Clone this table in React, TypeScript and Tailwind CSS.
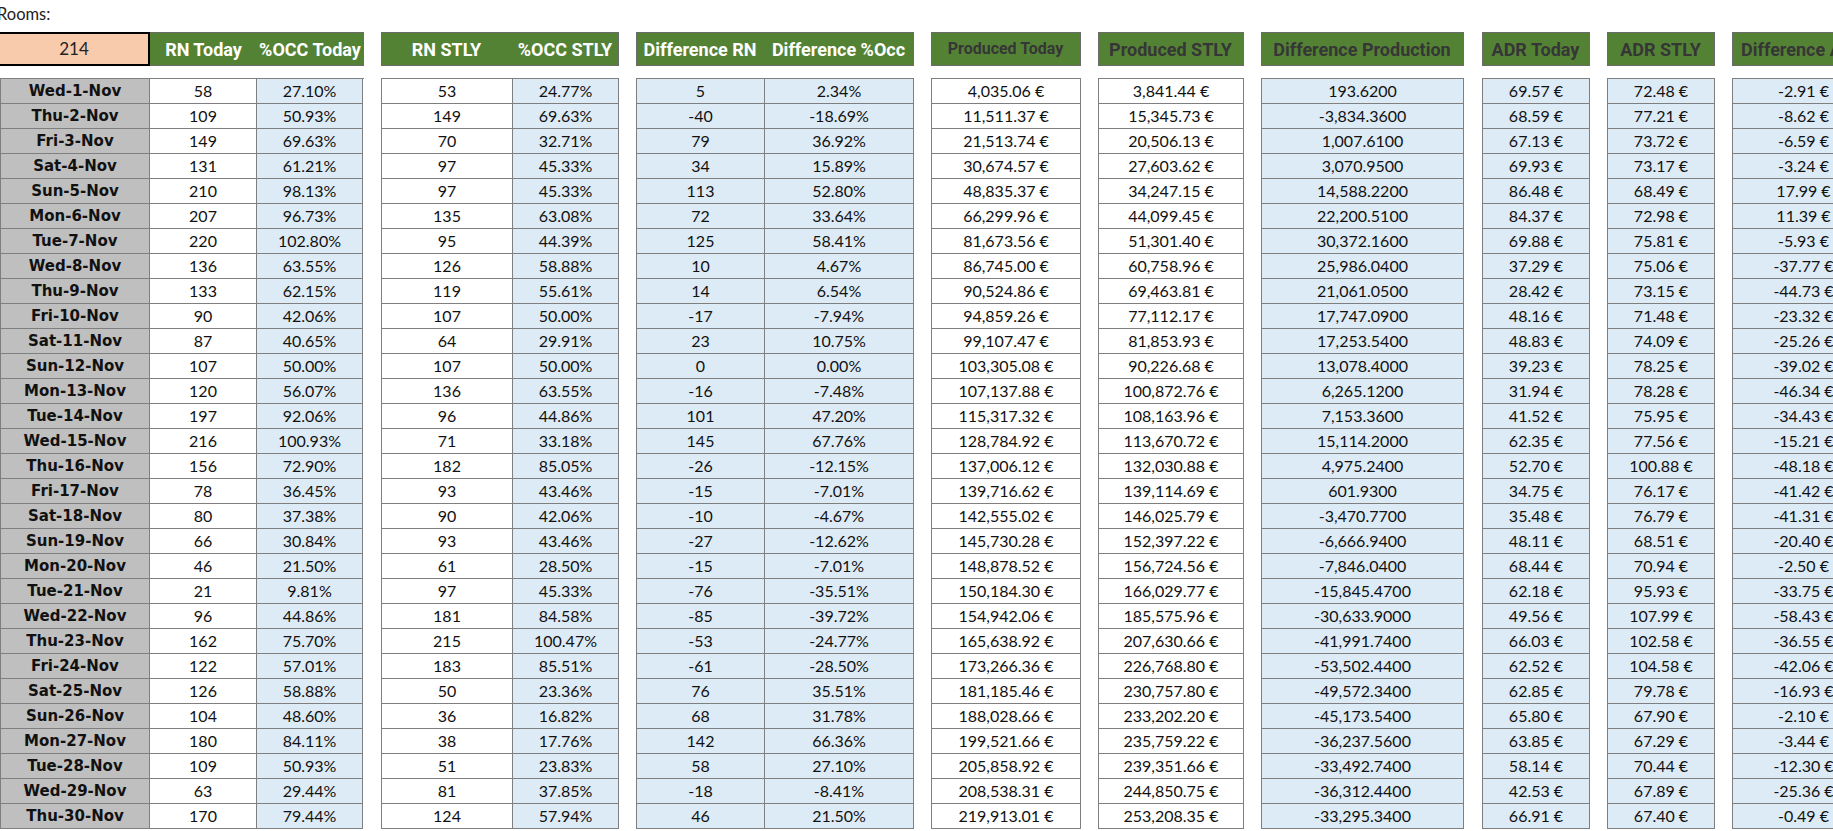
import React from 'react';

const rows: string[][] = [
  ['Wed-1-Nov', '58', '27.10%', '53', '24.77%', '5', '2.34%', '4,035.06 €', '3,841.44 €', '193.6200', '69.57 €', '72.48 €', '-2.91 €'],
  ['Thu-2-Nov', '109', '50.93%', '149', '69.63%', '-40', '-18.69%', '11,511.37 €', '15,345.73 €', '-3,834.3600', '68.59 €', '77.21 €', '-8.62 €'],
  ['Fri-3-Nov', '149', '69.63%', '70', '32.71%', '79', '36.92%', '21,513.74 €', '20,506.13 €', '1,007.6100', '67.13 €', '73.72 €', '-6.59 €'],
  ['Sat-4-Nov', '131', '61.21%', '97', '45.33%', '34', '15.89%', '30,674.57 €', '27,603.62 €', '3,070.9500', '69.93 €', '73.17 €', '-3.24 €'],
  ['Sun-5-Nov', '210', '98.13%', '97', '45.33%', '113', '52.80%', '48,835.37 €', '34,247.15 €', '14,588.2200', '86.48 €', '68.49 €', '17.99 €'],
  ['Mon-6-Nov', '207', '96.73%', '135', '63.08%', '72', '33.64%', '66,299.96 €', '44,099.45 €', '22,200.5100', '84.37 €', '72.98 €', '11.39 €'],
  ['Tue-7-Nov', '220', '102.80%', '95', '44.39%', '125', '58.41%', '81,673.56 €', '51,301.40 €', '30,372.1600', '69.88 €', '75.81 €', '-5.93 €'],
  ['Wed-8-Nov', '136', '63.55%', '126', '58.88%', '10', '4.67%', '86,745.00 €', '60,758.96 €', '25,986.0400', '37.29 €', '75.06 €', '-37.77 €'],
  ['Thu-9-Nov', '133', '62.15%', '119', '55.61%', '14', '6.54%', '90,524.86 €', '69,463.81 €', '21,061.0500', '28.42 €', '73.15 €', '-44.73 €'],
  ['Fri-10-Nov', '90', '42.06%', '107', '50.00%', '-17', '-7.94%', '94,859.26 €', '77,112.17 €', '17,747.0900', '48.16 €', '71.48 €', '-23.32 €'],
  ['Sat-11-Nov', '87', '40.65%', '64', '29.91%', '23', '10.75%', '99,107.47 €', '81,853.93 €', '17,253.5400', '48.83 €', '74.09 €', '-25.26 €'],
  ['Sun-12-Nov', '107', '50.00%', '107', '50.00%', '0', '0.00%', '103,305.08 €', '90,226.68 €', '13,078.4000', '39.23 €', '78.25 €', '-39.02 €'],
  ['Mon-13-Nov', '120', '56.07%', '136', '63.55%', '-16', '-7.48%', '107,137.88 €', '100,872.76 €', '6,265.1200', '31.94 €', '78.28 €', '-46.34 €'],
  ['Tue-14-Nov', '197', '92.06%', '96', '44.86%', '101', '47.20%', '115,317.32 €', '108,163.96 €', '7,153.3600', '41.52 €', '75.95 €', '-34.43 €'],
  ['Wed-15-Nov', '216', '100.93%', '71', '33.18%', '145', '67.76%', '128,784.92 €', '113,670.72 €', '15,114.2000', '62.35 €', '77.56 €', '-15.21 €'],
  ['Thu-16-Nov', '156', '72.90%', '182', '85.05%', '-26', '-12.15%', '137,006.12 €', '132,030.88 €', '4,975.2400', '52.70 €', '100.88 €', '-48.18 €'],
  ['Fri-17-Nov', '78', '36.45%', '93', '43.46%', '-15', '-7.01%', '139,716.62 €', '139,114.69 €', '601.9300', '34.75 €', '76.17 €', '-41.42 €'],
  ['Sat-18-Nov', '80', '37.38%', '90', '42.06%', '-10', '-4.67%', '142,555.02 €', '146,025.79 €', '-3,470.7700', '35.48 €', '76.79 €', '-41.31 €'],
  ['Sun-19-Nov', '66', '30.84%', '93', '43.46%', '-27', '-12.62%', '145,730.28 €', '152,397.22 €', '-6,666.9400', '48.11 €', '68.51 €', '-20.40 €'],
  ['Mon-20-Nov', '46', '21.50%', '61', '28.50%', '-15', '-7.01%', '148,878.52 €', '156,724.56 €', '-7,846.0400', '68.44 €', '70.94 €', '-2.50 €'],
  ['Tue-21-Nov', '21', '9.81%', '97', '45.33%', '-76', '-35.51%', '150,184.30 €', '166,029.77 €', '-15,845.4700', '62.18 €', '95.93 €', '-33.75 €'],
  ['Wed-22-Nov', '96', '44.86%', '181', '84.58%', '-85', '-39.72%', '154,942.06 €', '185,575.96 €', '-30,633.9000', '49.56 €', '107.99 €', '-58.43 €'],
  ['Thu-23-Nov', '162', '75.70%', '215', '100.47%', '-53', '-24.77%', '165,638.92 €', '207,630.66 €', '-41,991.7400', '66.03 €', '102.58 €', '-36.55 €'],
  ['Fri-24-Nov', '122', '57.01%', '183', '85.51%', '-61', '-28.50%', '173,266.36 €', '226,768.80 €', '-53,502.4400', '62.52 €', '104.58 €', '-42.06 €'],
  ['Sat-25-Nov', '126', '58.88%', '50', '23.36%', '76', '35.51%', '181,185.46 €', '230,757.80 €', '-49,572.3400', '62.85 €', '79.78 €', '-16.93 €'],
  ['Sun-26-Nov', '104', '48.60%', '36', '16.82%', '68', '31.78%', '188,028.66 €', '233,202.20 €', '-45,173.5400', '65.80 €', '67.90 €', '-2.10 €'],
  ['Mon-27-Nov', '180', '84.11%', '38', '17.76%', '142', '66.36%', '199,521.66 €', '235,759.22 €', '-36,237.5600', '63.85 €', '67.29 €', '-3.44 €'],
  ['Tue-28-Nov', '109', '50.93%', '51', '23.83%', '58', '27.10%', '205,858.92 €', '239,351.66 €', '-33,492.7400', '58.14 €', '70.44 €', '-12.30 €'],
  ['Wed-29-Nov', '63', '29.44%', '81', '37.85%', '-18', '-8.41%', '208,538.31 €', '244,850.75 €', '-36,312.4400', '42.53 €', '67.89 €', '-25.36 €'],
  ['Thu-30-Nov', '170', '79.44%', '124', '57.94%', '46', '21.50%', '219,913.01 €', '253,208.35 €', '-33,295.3400', '66.91 €', '67.40 €', '-0.49 €'],
];

type Col = { w: string; bg: string; f: number; label: string };
type Group = { ml: string; dark: boolean; small?: boolean; cols: Col[] };

const BLUE = 'bg-[#ddebf7]';
const WHITE = 'bg-white';

// first group (dates + RN Today) gets its own header with the rooms box
const groups: Group[] = [
  {
    ml: '',
    dark: false,
    cols: [
      { w: 'w-[149px]', bg: 'bg-[#bfbfbf]', f: 0, label: '' },
      { w: 'w-[107px]', bg: WHITE, f: 1, label: 'RN Today' },
      { w: 'w-[106px]', bg: BLUE, f: 2, label: '%OCC Today' },
    ],
  },
  {
    ml: 'ml-[17px]',
    dark: false,
    cols: [
      { w: 'w-[131px]', bg: WHITE, f: 3, label: 'RN STLY' },
      { w: 'w-[106px]', bg: BLUE, f: 4, label: '%OCC STLY' },
    ],
  },
  {
    ml: 'ml-[17px]',
    dark: false,
    cols: [
      { w: 'w-[128px]', bg: BLUE, f: 5, label: 'Difference RN' },
      { w: 'w-[149px]', bg: BLUE, f: 6, label: 'Difference %Occ' },
    ],
  },
  { ml: 'ml-[17px]', dark: true, small: true, cols: [{ w: 'w-[149px]', bg: WHITE, f: 7, label: 'Produced Today' }] },
  { ml: 'ml-[17px]', dark: true, cols: [{ w: 'w-[145px]', bg: WHITE, f: 8, label: 'Produced STLY' }] },
  { ml: 'ml-[17px]', dark: true, cols: [{ w: 'w-[202px]', bg: BLUE, f: 9, label: 'Difference Production' }] },
  { ml: 'ml-[18px]', dark: true, cols: [{ w: 'w-[107px]', bg: BLUE, f: 10, label: 'ADR Today' }] },
  { ml: 'ml-[17px]', dark: true, cols: [{ w: 'w-[107px]', bg: BLUE, f: 11, label: 'ADR STLY' }] },
  { ml: 'ml-[17px]', dark: true, cols: [{ w: 'w-[142px]', bg: BLUE, f: 12, label: 'Difference ADR' }] },
];

const HeaderLabel = ({ col, g }: { col: Col; g: Group }) => (
  <div
    className={`${col.w} shrink-0 flex items-center justify-center whitespace-nowrap font-bold font-['Roboto',sans-serif] ${
      g.dark ? 'text-[#363636]' : 'text-white'
    } ${g.small ? 'text-[16px]' : 'text-[18px]'}`}
  >
    {col.label}
  </div>
);

const GroupBlock = ({ g, first }: { g: Group; first: boolean }) => {
  return (
    <div className={`flex flex-col shrink-0 ${g.ml}`}>
      {/* header */}
      {first ? (
        <div className="flex h-[34px]">
          <div className="w-[150px] shrink-0 bg-[#f8cbad] border-2 border-l-0 border-black flex items-center justify-center text-[17px] text-[#222] font-['Lato',sans-serif]">
            214
          </div>
          <div className="flex bg-[#548235] border border-l-0 border-[#6b6b6b]">
            {g.cols.slice(1).map((c) => (
              <HeaderLabel key={c.f} col={c} g={g} />
            ))}
          </div>
        </div>
      ) : (
        <div className="flex h-[34px] bg-[#548235] border border-[#6b6b6b]">
          {g.cols.map((c, i) => (
            <div key={c.f} className={i === 0 ? '-ml-px flex' : 'flex'}>
              <HeaderLabel col={c} g={g} />
            </div>
          ))}
        </div>
      )}

      {/* data */}
      <div className="mt-[12px] border-t border-l border-[#7f7f7f] flex flex-col">
        {rows.map((r, ri) => (
          <div key={ri} className="flex h-[25px]">
            {g.cols.map((c) => (
              <div
                key={c.f}
                className={`${c.w} ${c.bg} shrink-0 border-r border-b border-[#7f7f7f] flex items-center justify-center whitespace-nowrap ${
                  c.f === 0
                    ? "font-bold text-[15px] text-[#111] font-['DejaVu_Sans',sans-serif]"
                    : "text-[16px] text-[#111] font-['Lato',sans-serif]"
                }`}
              >
                {r[c.f]}
              </div>
            ))}
          </div>
        ))}
      </div>
    </div>
  );
};

export default function App() {
  return (
    <div className="w-[1833px] h-[831px] overflow-hidden bg-white">
      <div className="h-[32px] flex items-end pb-[5px] -ml-[3px] text-[16.5px] text-[#222] font-['Lato',sans-serif]">
        Rooms:
      </div>
      <div className="flex">
        {groups.map((g, i) => (
          <GroupBlock key={i} g={g} first={i === 0} />
        ))}
      </div>
    </div>
  );
}
